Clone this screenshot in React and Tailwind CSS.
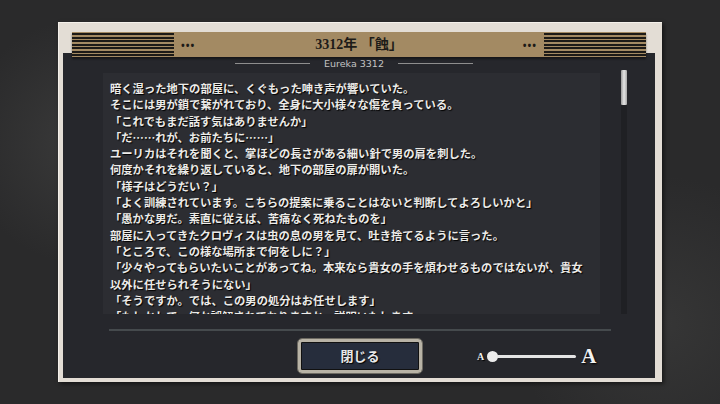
import React from 'react';

const lines = [
  '暗く湿った地下の部屋に、くぐもった呻き声が響いていた。',
  'そこには男が鎖で繋がれており、全身に大小様々な傷を負っている。',
  '「これでもまだ話す気はありませんか」',
  '「だ……れが、お前たちに……」',
  'ユーリカはそれを聞くと、掌ほどの長さがある細い針で男の肩を刺した。',
  '何度かそれを繰り返していると、地下の部屋の扉が開いた。',
  '「様子はどうだい？」',
  '「よく訓練されています。こちらの提案に乗ることはないと判断してよろしいかと」',
  '「愚かな男だ。素直に従えば、苦痛なく死ねたものを」',
  '部屋に入ってきたクロヴィスは虫の息の男を見て、吐き捨てるように言った。',
  '「ところで、この様な場所まで何をしに？」',
  '「少々やってもらいたいことがあってね。本来なら貴女の手を煩わせるものではないが、貴女',
  '以外に任せられそうにない」',
  '「そうですか。では、この男の処分はお任せします」',
  '「もしかして、何か誤解されておりますか。説明いたします」',
];

function Stripes() {
  return (
    <div className="flex h-full w-[102px] flex-col justify-between py-[1px]">
      {[0, 1, 2, 3, 4, 5, 6].map((i) => (
        <div key={i} className="h-[2px] bg-[#1c1a17]" />
      ))}
    </div>
  );
}

export default function App() {
  return (
    <div className="h-[404px] w-[720px] overflow-hidden bg-[#2a2a2b] bg-[radial-gradient(circle_at_12%_35%,#3a3a3a_0%,transparent_18%),radial-gradient(circle_at_92%_80%,#363636_0%,transparent_20%)] pl-[58px] pt-[22px]">
      {/* frame */}
      <div className="flex h-[360px] w-[604px] flex-col border-l border-t border-[#f4f0ea] bg-[#e3ddd5] pb-[4px] pl-[4px] pr-[7px] pt-[9px] shadow-[2px_2px_4px_rgba(0,0,0,0.5)]">
        {/* header */}
        <div className="relative z-10 mx-[9px] -mb-[4px] flex h-[25px] items-center bg-[#a38a63] shadow-[0_2px_2px_rgba(0,0,0,0.45)]">
          <Stripes />
          <span className="ml-[7px] text-[10px] font-bold leading-none tracking-[1px] text-[#1c1a17]">•••</span>
          <div className="flex-1 text-center font-['Liberation_Serif','Noto_Sans_CJK_JP',serif] text-[14px] font-bold text-[#1d1b18]">
            3312年 「蝕」
          </div>
          <span className="mr-[7px] text-[10px] font-bold leading-none tracking-[1px] text-[#1c1a17]">•••</span>
          <Stripes />
        </div>

        {/* panel */}
        <div className="flex flex-1 flex-col bg-[#26272c]">
          <div className="mt-[5px] flex h-[11px] items-center justify-center gap-[14px] pr-[10px]">
            <div className="h-[1px] w-[75px] bg-[#8e8e8e]" />
            <span className="font-['DejaVu_Sans',sans-serif] text-[9.5px] leading-none text-[#c4c4c4]">Eureka 3312</span>
            <div className="h-[1px] w-[75px] bg-[#8e8e8e]" />
          </div>

          <div className="mt-[1px] flex h-[244px]">
            <div className="ml-[40px] mt-[3px] h-[241px] w-[497px] overflow-hidden bg-[#2c2d32] pl-[7px] pt-[7px]">
              {lines.map((l, i) => (
                <div
                  key={i}
                  className="whitespace-nowrap font-['Noto_Sans_CJK_JP',sans-serif] text-[11.3px] font-bold leading-[16.3px] text-[#ecebe8] [text-shadow:1px_1px_1px_#000]"
                >
                  {l}
                </div>
              ))}
            </div>
            <div className="ml-[21px] flex h-[244px] w-[6px] flex-col bg-[#1f2024]">
              <div className="h-[35px] w-[6px] rounded-[1px] bg-gradient-to-r from-[#9c9c9c] via-[#e6e6e6] to-[#a8a8a8]" />
            </div>
          </div>

          <div className="ml-[46px] mt-[15px] h-[2px] w-[502px] bg-[#454a4d]" />

          <div className="mt-[8px] flex h-[34px] items-center">
            <button className="ml-[235px] flex h-[34px] w-[124px] items-center justify-center rounded-[4px] border-[3px] border-[#b8b3a6] bg-[#262d3c] shadow-[inset_0_0_0_1px_#111] outline outline-1 outline-[#6d6a62]">
              <span className="font-['Noto_Sans_CJK_JP',sans-serif] text-[13px] font-bold text-[#e9e9e9] [text-shadow:1px_1px_1px_#000]">閉じる</span>
            </button>
            <div className="ml-[55px] flex items-center">
              <span className="font-['Liberation_Serif',serif] text-[10px] font-bold text-[#eee] [text-shadow:1px_1px_1px_#000]">A</span>
              <div className="ml-[3px] h-[11px] w-[11px] rounded-full bg-[#ececec]" />
              <div className="-ml-[1px] h-[3px] w-[79px] rounded-r-full bg-[#e4e4e4]" />
              <span className="ml-[5px] font-['Liberation_Serif',serif] text-[21px] font-bold leading-none text-[#f2f2f2] [text-shadow:1px_1px_2px_#000]">A</span>
            </div>
          </div>
        </div>
      </div>
    </div>
  );
}
